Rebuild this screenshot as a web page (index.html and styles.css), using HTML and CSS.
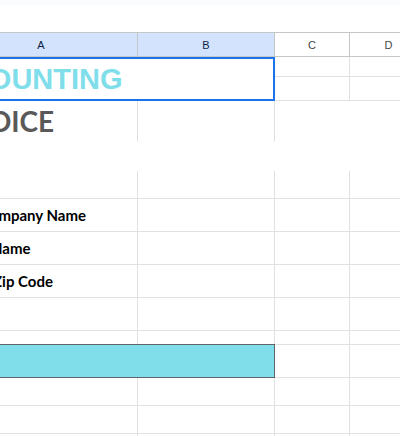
FILE: index.html
```html
<!DOCTYPE html>
<html lang="en">
<head>
  <meta charset="UTF-8" />
  <meta name="viewport" content="width=device-width, initial-scale=1.0"/>
  <title>Accounting Invoice</title>
  <link rel="stylesheet" href="styles.css">
</head>
<body>
  <div class="topbar"></div>
  <div class="formula-bar"></div>

  <div class="sheet">
    <!-- column headers -->
    <div class="hd hd-sel">A</div>
    <div class="hd hd-sel">B</div>
    <div class="hd">C</div>
    <div class="hd">D</div>

    <!-- rows 1-2 -->
    <div class="cell title">ACCOUNTING</div>
    <div class="cell"></div>
    <div class="cell"></div>
    <div class="cell r2"></div>
    <div class="cell r2"></div>

    <!-- row 3 -->
    <div class="cell invoice no-bottom">INVOICE</div>
    <div class="cell no-bottom"></div>
    <div class="cell span-cd no-bottom no-right"></div>

    <!-- row 4 -->
    <div class="cell span-all no-bottom no-right"></div>

    <!-- row 5 -->
    <div class="cell"></div>
    <div class="cell"></div>
    <div class="cell"></div>
    <div class="cell"></div>

    <!-- rows 6-9 -->
    <div class="cell label label-company">Company Name</div>
    <div class="cell"></div>
    <div class="cell"></div>
    <div class="cell"></div>

    <div class="cell label label-name">Name</div>
    <div class="cell"></div>
    <div class="cell"></div>
    <div class="cell"></div>

    <div class="cell label label-zip">Zip Code</div>
    <div class="cell"></div>
    <div class="cell"></div>
    <div class="cell"></div>

    <div class="cell"></div>
    <div class="cell"></div>
    <div class="cell"></div>
    <div class="cell"></div>

    <!-- row 10 -->
    <div class="cell"></div>
    <div class="cell"></div>
    <div class="cell"></div>
    <div class="cell"></div>

    <!-- row 11 -->
    <div class="cell band"></div>
    <div class="cell"></div>
    <div class="cell"></div>

    <!-- rows 12-14 -->
    <div class="cell"></div>
    <div class="cell"></div>
    <div class="cell"></div>
    <div class="cell"></div>

    <div class="cell"></div>
    <div class="cell"></div>
    <div class="cell"></div>
    <div class="cell"></div>

    <div class="cell"></div>
    <div class="cell"></div>
    <div class="cell"></div>
    <div class="cell"></div>
  </div>
</body>
</html>
```

FILE: styles.css
```css
body {
  margin: 0;
  padding: 0;
  background: white;
  overflow: hidden;
  font-family: "Liberation Sans", Arial, sans-serif;
}
.topbar {
  height: 5px;
  background: #f9fbfd;
}
.formula-bar {
  height: 27px;
  background: white;
}
/* sheet is scrolled ~55px to the right, so column A starts off screen */
.sheet {
  display: grid;
  grid-template-columns: 193px 137px 75px 78px;
  grid-template-rows: 24px 20px 24px 41px 29px 28px 33px 33px 33px 33px 14px 33px 28px 28px 28px;
  margin-left: -55px;
  border-top: 1px solid #c4c7c5;
  width: 483px;
}
.hd {
  display: flex;
  align-items: center;
  justify-content: center;
  font-size: 11px;
  color: #444746;
  border-right: 1px solid #c4c7c5;
  border-bottom: 1px solid #c4c7c5;
}
.hd-sel {
  background: #d3e3fd;
  color: #0b1f47;
}
.cell {
  border-right: 1px solid #e1e1e1;
  border-bottom: 1px solid #e1e1e1;
  overflow: hidden;
  white-space: nowrap;
  display: flex;
  align-items: center;
}
.r2 {
  grid-row: 3;
}
.no-bottom {
  border-bottom-color: transparent;
}
.no-right {
  border-right-color: transparent;
}
.span-cd {
  grid-column: 3 / 5;
}
.span-all {
  grid-column: 1 / 5;
}
.title {
  grid-column: 1 / 3;
  grid-row: 2 / 4;
  border: 2px solid #1a73e8;
  font-size: 29px;
  font-weight: bold;
  color: #80deea;
  text-indent: -21px;
}
.invoice {
  font-family: Lato, "Open Sans", sans-serif;
  font-size: 28px;
  font-weight: bold;
  color: #595959;
  text-indent: -5px;
}
.label {
  font-family: Lato, "Open Sans", sans-serif;
  font-size: 15px;
  font-weight: bold;
  color: #000;
}
.label-company {
  text-indent: 35px;
}
.label-name {
  text-indent: 46px;
}
.label-zip {
  text-indent: 48px;
}
.band {
  grid-column: 1 / 3;
  background: #80deea;
  border-right-color: #5f6368;
  border-bottom-color: #5f6368;
  box-shadow: 0 -1px 0 #5f6368;
}
```
